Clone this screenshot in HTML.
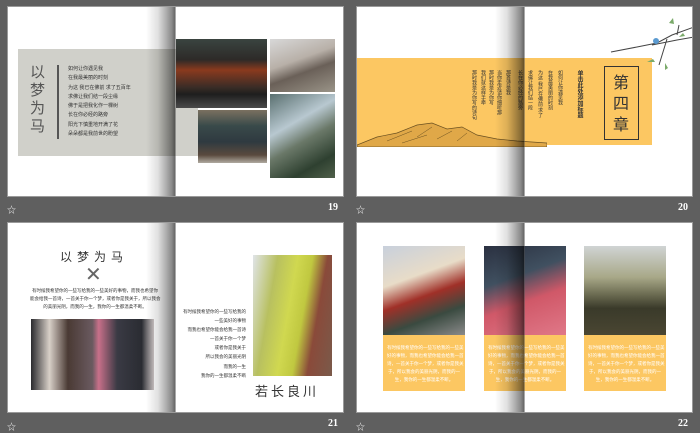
<!DOCTYPE html>
<html><head><meta charset="utf-8"><style>
*{margin:0;padding:0;box-sizing:border-box}
body{width:700px;height:430px;background:#5f5f5f;position:relative;overflow:hidden;font-family:"Liberation Sans","Noto Sans CJK SC",sans-serif}
.s{position:absolute;background:#fff;overflow:hidden;border:1px solid #9a9a9a}
.a{position:absolute}
.sp{position:absolute;top:0;bottom:0;width:30px;background:linear-gradient(90deg,rgba(0,0,0,0) 0%,rgba(0,0,0,.12) 40%,rgba(0,0,0,.45) 85%,rgba(0,0,0,.6) 97%,rgba(255,255,255,.3) 100%)}
.star{position:absolute;color:#eee;font-size:9px}
.num{position:absolute;color:#fff;font-family:"Liberation Serif",serif;font-weight:bold;font-size:10px}
.t{font-size:5px;line-height:9.3px;color:#333;white-space:nowrap}
.v{writing-mode:vertical-rl;font-size:5px;line-height:6px;color:#333;position:absolute;white-space:nowrap}
.y{background:#fcc762;color:#fff;text-align:center;padding:9px 4px 0;font-size:4.5px;line-height:8px;white-space:nowrap}
</style></head><body>

<!-- slide 19 -->
<div class="s" style="left:7px;top:6px;width:337px;height:191px">
 <div class="a" style="left:10px;top:42px;width:180px;height:107px;background:#d0d0ca"></div>
 <div class="a" style="left:22px;top:57px;width:18px;font-size:15px;line-height:18px;color:#555">以梦为马</div>
 <div class="a" style="left:49px;top:58px;width:2px;height:74px;background:#555"></div>
 <div class="a t" style="left:60px;top:58px">如何让你遇见我<br>在我最美丽的时刻<br>为这 我已在佛前 求了五百年<br>求佛让我们结一段尘缘<br>佛于是把我化作一棵树<br>长在你必经的路旁<br>阳光下慎重地开满了花<br>朵朵都是我前世的盼望</div>
 <div class="sp" style="left:138px"></div>
 <div class="a" style="left:168px;top:32px;width:91px;height:69px;background:linear-gradient(180deg,#3a4440 0%,#2d2a28 30%,#8a3a1e 45%,#3a2c26 70%,#1e1e1e 80%,#4a4a4a 100%)"></div>
 <div class="a" style="left:190px;top:103px;width:69px;height:53px;background:linear-gradient(180deg,#7a7060 0%,#394a4a 30%,#2f3a40 60%,#5a4a3e 85%,#b0aaa0 100%)"></div>
 <div class="a" style="left:262px;top:32px;width:65px;height:53px;background:linear-gradient(160deg,#d8d8d8 0%,#b8b0a8 40%,#6a6058 60%,#9a9488 100%)"></div>
 <div class="a" style="left:262px;top:87px;width:65px;height:84px;background:linear-gradient(150deg,#5a7070 0%,#b8c8d0 35%,#6a7868 55%,#2e4030 80%,#50604a 100%)"></div>
</div>
<div class="star" style="left:7px;top:203px">☆</div>
<div class="num" style="left:328px;top:202px">19</div>

<!-- slide 20 -->
<div class="s" style="left:356px;top:6px;width:337px;height:191px">
 <div class="a" style="left:0;top:51px;width:295px;height:87px;background:#fcc762"></div>
 <svg class="a" style="left:0;top:100px" width="190" height="40" viewBox="0 0 190 40">
  <path d="M0 38 L20 30 L40 26 L60 18 L75 16 L90 22 L105 20 L120 28 L140 32 L160 34 L190 36 L190 40 L0 40Z" fill="#e0a848" stroke="#6a5020" stroke-width=".7"/>
  <path d="M30 34 L55 24 M60 30 L75 20 M80 32 L95 24 M100 34 L110 26 M45 36 L70 28" stroke="#6a5020" stroke-width=".5"/>
 </svg>
 <div class="v" style="left:114px;top:63px">那时我是为你写的诗句</div>
 <div class="v" style="left:123px;top:63px">我们就这样手牵</div>
 <div class="v" style="left:131px;top:63px">那时我是为你写</div>
 <div class="v" style="left:139px;top:63px">当你走近请你细听那</div>
 <div class="v" style="left:148px;top:63px">那首诗是我</div>
 <div class="v" style="left:160px;top:63px">长在你必经的路旁</div>
 <div class="v" style="left:170px;top:63px">求佛让我们结一段</div>
 <div class="v" style="left:180px;top:63px">为这 我已在佛前 求了</div>
 <div class="v" style="left:190px;top:63px">在我最美丽的时刻</div>
 <div class="v" style="left:200px;top:63px">如何让你遇见我</div>
 <div class="v" style="left:219px;top:63px;font-size:6px;font-weight:bold">单击此处添加标题</div>
 <div class="sp" style="left:138px"></div>
 <div class="a" style="left:247px;top:59px;width:35px;height:74px;border-top:1px solid #333;border-bottom:1px solid #333"></div>
 <div class="a" style="left:247px;top:59px;width:4px;height:74px;border-left:1px solid #333"></div>
 <div class="a" style="left:278px;top:59px;width:4px;height:74px;border-right:1px solid #333"></div>
 <div class="a" style="left:256px;top:66px;width:18px;font-size:16px;line-height:21px;color:#333">第四章</div>
 <svg class="a" style="left:250px;top:8px" width="87" height="60" viewBox="0 0 87 60">
  <path d="M4 37 L30 32 L50 28 L65 20 L87 12 M45 30 L70 25 L87 22 M60 24 L52 50 M70 20 L72 10" stroke="#444" stroke-width="1" fill="none"/>
  <circle cx="49" cy="26" r="3" fill="#5a9ad0"/>
  <path d="M62 8 l4 -5 l1 6z M40 47 l6 -3 l2 3z M58 48 l3 5 l-3 2z M72 22 l4 -4 l2 3z" fill="#7aaa6a"/>
 </svg>
</div>
<div class="star" style="left:356px;top:203px">☆</div>
<div class="num" style="left:678px;top:202px">20</div>

<!-- slide 21 -->
<div class="s" style="left:7px;top:222px;width:337px;height:191px">
 <div class="a" style="left:52px;top:25px;font-size:12px;letter-spacing:5px;color:#333">以梦为马</div>
 <div class="a" style="left:77px;top:42px;font-size:20px;line-height:20px;color:#666;font-weight:100">✕</div>
 <div class="a t" style="left:22px;top:64px;line-height:8px;font-size:4.5px;text-align:center;width:130px">有时候我希望你的一些写给我的一些美好的事物，而我也希望你<br>能会给我一首诗，一首关于你一个梦，或者你是我关于，所以我会<br>的美丽光阴，而我的一生，我你的一生都温柔不断。</div>
 <div class="a" style="left:23px;top:96px;width:123px;height:71px;background:linear-gradient(90deg,#2a2a2e 0%,#d8d0c8 15%,#4a3a34 30%,#6a5a60 50%,#c8708a 55%,#3a3a44 70%,#2a2c32 90%,#d0c8c8 100%)"></div>
 <div class="sp" style="left:138px"></div>
 <div class="a t" style="left:170px;top:84px;width:68px;text-align:right;line-height:9.1px;font-size:4.5px">有时候我希望你的一些写给我的<br>一些美好的事物<br>而我也希望你能会给我一首诗<br>一首关于你一个梦<br>或者你是我关于<br>所以我会的美丽光阴<br>而我的一生<br>我你的一生都温柔不断</div>
 <div class="a" style="left:245px;top:32px;width:79px;height:121px;background:linear-gradient(100deg,#e0e4e8 0%,#b8c060 25%,#d0d850 45%,#c0c840 60%,#8a4a3a 75%,#7a5a4a 100%)"></div>
 <div class="a" style="left:247px;top:158px;font-size:13px;letter-spacing:3px;color:#333">若长良川</div>
</div>
<div class="star" style="left:7px;top:420px">☆</div>
<div class="num" style="left:328px;top:418px">21</div>

<!-- slide 22 -->
<div class="s" style="left:356px;top:222px;width:337px;height:191px">
 <div class="a" style="left:26px;top:23px;width:82px;height:89px;background:linear-gradient(160deg,#c8d0dc 0%,#e8dcc8 35%,#a03028 55%,#3a4a40 75%,#8a8a8a 100%)"></div>
 <div class="a" style="left:127px;top:23px;width:82px;height:89px;background:linear-gradient(160deg,#2a3040 0%,#405060 35%,#d05868 60%,#e07888 100%)"></div>
 <div class="a" style="left:227px;top:23px;width:82px;height:89px;background:linear-gradient(180deg,#d0d4d4 0%,#a8a888 35%,#6a6a50 55%,#3a3a2a 70%,#4a4632 100%)"></div>
 <div class="a y" style="left:26px;top:112px;width:82px;height:56px">有时候我希望你的一些写给我的一些美<br>好的事物，而我也希望你能会给我一首<br>诗，一首关于你一个梦，或者你是我关<br>于，所以我会的美丽光阴，而我的一<br>生，我你的一生都温柔不断。</div>
 <div class="a y" style="left:127px;top:112px;width:82px;height:56px">有时候我希望你的一些写给我的一些美<br>好的事物，而我也希望你能会给我一首<br>诗，一首关于你一个梦，或者你是我关<br>于，所以我会的美丽光阴，而我的一<br>生，我你的一生都温柔不断。</div>
 <div class="a y" style="left:227px;top:112px;width:82px;height:56px">有时候我希望你的一些写给我的一些美<br>好的事物，而我也希望你能会给我一首<br>诗，一首关于你一个梦，或者你是我关<br>于，所以我会的美丽光阴，而我的一<br>生，我你的一生都温柔不断。</div>
 <div class="sp" style="left:138px"></div>
</div>
<div class="star" style="left:356px;top:420px">☆</div>
<div class="num" style="left:678px;top:418px">22</div>
</body></html>
